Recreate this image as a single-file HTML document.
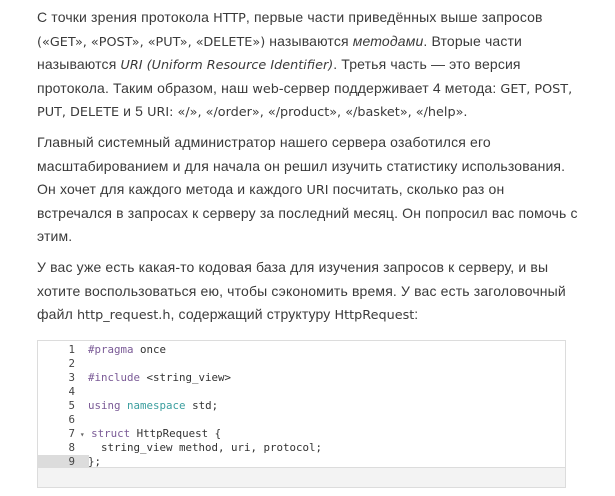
<!DOCTYPE html>
<html><head><meta charset="utf-8"><style>
body{margin:0;background:#fff;width:615px;height:496px;overflow:hidden;font-family:"Liberation Sans",sans-serif;}
.t{position:absolute;left:37px;font-size:14px;line-height:23.6px;color:#3a3a3a;white-space:nowrap;letter-spacing:0.15px;}
.l{font-family:"DejaVu Sans",sans-serif;font-size:12.8px;letter-spacing:0;line-height:10px;}
i.l{font-style:oblique;}
.box{position:absolute;left:37px;top:340px;width:527px;height:146px;border:1px solid #dcdcdc;background:#fff;}
.foot{position:absolute;left:0;right:0;bottom:0;height:19px;background:#f3f3f3;border-top:1px solid #dcdcdc;}
.code{position:absolute;left:0;top:2px;font-family:"DejaVu Sans Mono",monospace;font-size:10.8px;line-height:14px;color:#333;}
.ln{display:inline-block;width:37px;text-align:right;color:#444;}
.row{height:14px;white-space:pre;position:relative;}
.g{position:absolute;left:0;width:51px;height:14px;}
.kw{color:#7a5a96}.kw2{color:#3a9e9e}
</style></head><body>
<div class="t" style="top:6px">
С точки зрения протокола <span class="l">HTTP</span>, первые части приведённых выше запросов<br>
<span class="l">(«GET», «POST», «PUT», «DELETE»)</span> называются <i>методами</i>. Вторые части<br>
называются <i class="l">URI (Uniform Resource Identifier)</i>. Третья часть — это версия<br>
протокола. Таким образом, наш <span class="l">web</span>-сервер поддерживает 4 метода: <span class="l">GET, POST,</span><br>
<span class="l">PUT, DELETE</span> и 5 <span class="l">URI: «/», «/order», «/product», «/basket», «/help».</span>
</div>
<div class="t" style="top:131px">
Главный системный администратор нашего сервера озаботился его<br>
масштабированием и для начала он решил изучить статистику использования.<br>
Он хочет для каждого метода и каждого <span class="l">URI</span> посчитать, сколько раз он<br>
встречался в запросах к серверу за последний месяц. Он попросил вас помочь с<br>
этим.
</div>
<div class="t" style="top:256px">
У вас уже есть какая-то кодовая база для изучения запросов к серверу, и вы<br>
хотите воспользоваться ею, чтобы сэкономить время. У вас есть заголовочный<br>
файл <span class="l">http_request.h</span>, содержащий структуру <span class="l">HttpRequest</span>:
</div>
<div class="box">
<div class="code">
<div class="row"><span class="ln">1</span>  <span class="kw">#pragma</span> once</div>
<div class="row"><span class="ln">2</span></div>
<div class="row"><span class="ln">3</span>  <span class="kw">#include</span> &lt;string_view&gt;</div>
<div class="row"><span class="ln">4</span></div>
<div class="row"><span class="ln">5</span>  <span class="kw">using</span> <span class="kw2">namespace</span> std;</div>
<div class="row"><span class="ln">6</span></div>
<div class="row"><span class="ln">7</span><span style="font-size:8px;color:#666"> ▾</span> <span class="kw">struct</span> HttpRequest {</div>
<div class="row"><span class="ln">8</span>    string_view method, uri, protocol;</div>
<div class="row"><span class="g" style="background:#dcdcdc"></span><span class="ln" style="position:relative">9</span>  };</div>
</div>
<div class="foot"></div>
</div>
</body></html>
